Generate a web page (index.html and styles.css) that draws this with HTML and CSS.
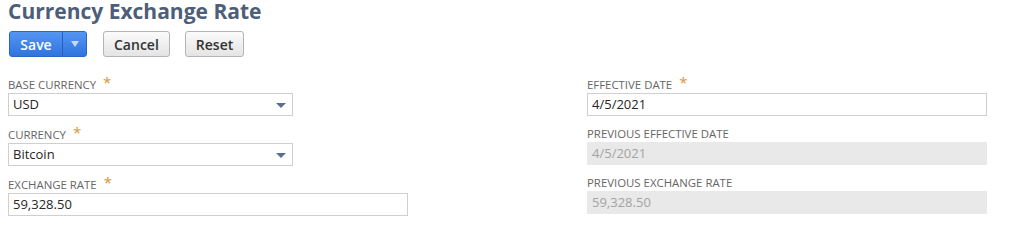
FILE: index.html
```html
<!DOCTYPE html>
<html lang="en">
<head>
<meta charset="utf-8">
<title>Currency Exchange Rate</title>
<link rel="stylesheet" href="styles.css">
</head>
<body>
<div class="page">
  <h1 class="title">Currency Exchange Rate</h1>
  <div class="toolbar">
    <div class="btn-split">
      <button class="btn-save" type="button">Save</button>
      <button class="btn-save-menu" type="button" aria-label="More"><span class="tri-light"></span></button>
    </div>
    <button class="btn" type="button">Cancel</button>
    <button class="btn" type="button">Reset</button>
  </div>
  <div class="form">
    <div class="col">
      <div class="field">
        <label class="label">BASE CURRENCY <span class="req">*</span></label>
        <div class="input select">USD<span class="tri"></span></div>
      </div>
      <div class="field">
        <label class="label">CURRENCY <span class="req">*</span></label>
        <div class="input select">Bitcoin<span class="tri"></span></div>
      </div>
      <div class="field">
        <label class="label">EXCHANGE RATE <span class="req">*</span></label>
        <div class="input wide">59,328.50</div>
      </div>
    </div>
    <div class="col">
      <div class="field">
        <label class="label">EFFECTIVE DATE <span class="req">*</span></label>
        <div class="input wide">4/5/2021</div>
      </div>
      <div class="field">
        <label class="label">PREVIOUS EFFECTIVE DATE</label>
        <div class="input wide disabled">4/5/2021</div>
      </div>
      <div class="field">
        <label class="label">PREVIOUS EXCHANGE RATE</label>
        <div class="input wide disabled">59,328.50</div>
      </div>
    </div>
  </div>
</div>
</body>
</html>
```

FILE: styles.css
```css
* { box-sizing: border-box; }
html, body { margin: 0; padding: 0; background: #fff; }
body {
  font-family: "Open Sans", "Liberation Sans", Arial, sans-serif;
  color: #262626;
}
.page { padding: 0 8px; }
.title {
  margin: 0;
  font-size: 21px;
  line-height: 22px;
  font-weight: 700;
  color: #4d5e79;
}
.toolbar {
  display: flex;
  align-items: center;
  margin-top: 9px;
  padding-left: 1px;
}
.btn-split {
  display: flex;
  height: 26px;
  border: 1px solid #2b63c4;
  border-radius: 3px;
  overflow: hidden;
  background: linear-gradient(#5596f3, #2f74e0);
}
.btn-save, .btn-save-menu {
  border: 0;
  margin: 0;
  background: transparent;
  color: #fff;
  font-family: inherit;
  font-size: 14px;
  font-weight: 600;
  height: 24px;
  padding: 0;
}
.btn-save { width: 52px; }
.btn-save-menu {
  width: 24px;
  border-left: 1px solid #2a5fb9;
  display: flex;
  align-items: center;
  justify-content: center;
}
.tri-light {
  width: 0; height: 0;
  border-left: 4px solid transparent;
  border-right: 4px solid transparent;
  border-top: 6px solid #c8d9f6;
}
.btn {
  margin-left: 16px;
  height: 26px;
  padding: 0 10px;
  border: 1px solid #b4b4b4;
  border-radius: 3px;
  background: linear-gradient(#fbfbfb, #e4e4e4);
  color: #333;
  font-family: inherit;
  font-size: 14px;
  font-weight: 600;
}
.btn + .btn { margin-left: 15px; padding: 0 10px; }
.form {
  display: grid;
  grid-template-columns: 400px 400px;
  column-gap: 179px;
  margin-top: 20px;
}
.field { margin-bottom: 11px; }
.label {
  display: block;
  font-size: 11.4px;
  line-height: 14px;
  color: #666;
  margin-bottom: 1px;
  white-space: nowrap;
}
.req {
  color: #d9953a;
  font-size: 15px;
  line-height: 10px;
  margin-left: 4px;
  vertical-align: 1px;
}
.input {
  position: relative;
  height: 23px;
  border: 1px solid #cfcfcf;
  background: #fff;
  font-size: 13px;
  line-height: 21px;
  padding: 0 4px;
  color: #262626;
}
.select { width: 285px; }
.wide { width: 400px; }
.disabled {
  background: #e9e9e9;
  border-color: #e9e9e9;
  color: #a3a3a3;
}
.tri {
  position: absolute;
  right: 6px;
  top: 9px;
  width: 0; height: 0;
  border-left: 5px solid transparent;
  border-right: 5px solid transparent;
  border-top: 5px solid #5a6e8e;
}
```
